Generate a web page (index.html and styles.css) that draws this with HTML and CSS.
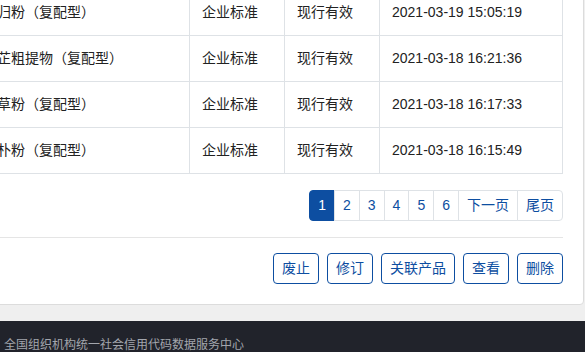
FILE: index.html
```html
<!DOCTYPE html>
<html lang="zh-CN">
<head>
    <meta charset="UTF-8">
    <meta name="viewport" content="width=device-width, initial-scale=1.0">
    <title>标准列表</title>
    <link rel="stylesheet" href="styles.css">
</head>
<body>
    <div class="main">
        <div class="card">
            <table class="std-table">
                <tr>
                    <td class="c-name">当归粉（复配型）</td>
                    <td class="c-type">企业标准</td>
                    <td class="c-state">现行有效</td>
                    <td class="c-date">2021-03-19 15:05:19</td>
                </tr>
                <tr>
                    <td class="c-name">白芷粗提物（复配型）</td>
                    <td class="c-type">企业标准</td>
                    <td class="c-state">现行有效</td>
                    <td class="c-date">2021-03-18 16:21:36</td>
                </tr>
                <tr>
                    <td class="c-name">甘草粉（复配型）</td>
                    <td class="c-type">企业标准</td>
                    <td class="c-state">现行有效</td>
                    <td class="c-date">2021-03-18 16:17:33</td>
                </tr>
                <tr>
                    <td class="c-name">厚朴粉（复配型）</td>
                    <td class="c-type">企业标准</td>
                    <td class="c-state">现行有效</td>
                    <td class="c-date">2021-03-18 16:15:49</td>
                </tr>
            </table>

            <ul class="pager">
                <li class="active"><a href="#">1</a></li>
                <li><a href="#">2</a></li>
                <li><a href="#">3</a></li>
                <li><a href="#">4</a></li>
                <li><a href="#">5</a></li>
                <li><a href="#">6</a></li>
                <li><a href="#">下一页</a></li>
                <li><a href="#">尾页</a></li>
            </ul>

            <hr class="line">

            <div class="actions">
                <button class="btn">废止</button>
                <button class="btn">修订</button>
                <button class="btn">关联产品</button>
                <button class="btn">查看</button>
                <button class="btn">删除</button>
            </div>
        </div>
    </div>
    <div class="footer">全国组织机构统一社会信用代码数据服务中心</div>
</body>
</html>
```

FILE: styles.css
```css
* {
    padding: 0;
    margin: 0;
    box-sizing: border-box;
}
body {
    background-color: #efefef;
    font-family: "Liberation Sans", "Noto Sans CJK SC", sans-serif;
    font-size: 14px;
    color: #222;
    overflow: hidden;
}
.main {
    padding-bottom: 16px;
}
.card {
    width: 641px;
    margin: -32px 0 0 -57px;
    padding: 20px;
    background-color: #fff;
    border: 1px solid #dcdcdc;
    border-radius: 4px;
}
.std-table {
    width: 100%;
    border-collapse: collapse;
}
.std-table td {
    padding: 12px;
    line-height: 21px;
    border: 1px solid #dee2e6;
    white-space: nowrap;
}
.std-table td.c-name {
    padding-left: 18px;
}
.c-type,
.c-state {
    width: 95px;
}
.c-date {
    width: 183px;
}
.pager {
    list-style: none;
    display: flex;
    justify-content: flex-end;
    margin-top: 16px;
}
.pager li a {
    display: block;
    padding: 5px 8px;
    line-height: 19px;
    color: #0d4ea1;
    text-decoration: none;
    border: 1px solid #dee2e6;
    margin-left: -1px;
    background-color: #fff;
}
.pager li:first-child a {
    border-radius: 4px 0 0 4px;
}
.pager li:last-child a {
    border-radius: 0 4px 4px 0;
}
.pager li.active a {
    background-color: #0d4ea1;
    border-color: #0d4ea1;
    color: #fff;
}
.line {
    border: none;
    border-top: 1px solid #e5e5e5;
    margin: 16px 0 15px;
}
.actions {
    display: flex;
    justify-content: flex-end;
    gap: 8px;
}
.btn {
    font-family: inherit;
    font-size: 14px;
    line-height: 19px;
    padding: 5px 8px;
    color: #0d4ea1;
    background-color: #fff;
    border: 1px solid #0d4ea1;
    border-radius: 4px;
}
.footer {
    background-color: #21232b;
    color: #a3a6ad;
    font-size: 12px;
    line-height: 20px;
    padding: 14px 4px 0;
    height: 40px;
}
```
